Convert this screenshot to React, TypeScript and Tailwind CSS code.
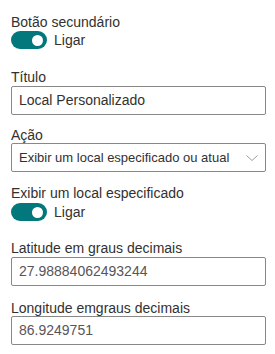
const FONT = "font-['Liberation_Sans',Arial,sans-serif]";

function Label({ text, className = '' }: { text: string; className?: string }) {
  return <div className={`text-[14px] leading-[18px] text-[#323130] ${className}`}>{text}</div>;
}

function Toggle({ className = '' }: { className?: string }) {
  return (
    <div className={`flex h-[18px] items-center gap-[7px] ${className}`}>
      <div className="flex h-[18px] w-[36px] items-center justify-end rounded-full bg-[#03787c] pr-[4px]">
        <div className="h-[11px] w-[11px] rounded-full bg-white" />
      </div>
      <span className="text-[14px] leading-[18px] text-[#323130]">Ligar</span>
    </div>
  );
}

function TextInput({ value, muted = false, className = '' }: { value: string; muted?: boolean; className?: string }) {
  return (
    <div
      className={`flex h-[29px] items-center rounded-[2px] border border-[#8a8886] bg-white px-[7px] text-[14px] ${
        muted ? 'text-[#57555a]' : 'text-[#323130]'
      } ${className}`}
    >
      {value}
    </div>
  );
}

function Dropdown({ value, className = '' }: { value: string; className?: string }) {
  return (
    <div
      className={`flex h-[29px] items-center justify-between rounded-[2px] border border-[#8a8886] bg-white pl-[7px] pr-[7px] text-[13px] text-[#323130] ${className}`}
    >
      <span className="whitespace-nowrap">{value}</span>
      <svg width="12" height="12" viewBox="0 0 12 12" fill="none" stroke="#a19f9d" strokeWidth="1">
        <polyline points="0.5,3.5 6,8.5 11.5,3.5" />
      </svg>
    </div>
  );
}

export default function App() {
  return (
    <div className={`h-[354px] w-[275px] bg-white pl-[11px] pr-[9px] pt-[13px] ${FONT}`}>
      <Label text="Botão secundário" />
      <Toggle />

      <Label text="Título" className="mt-[19px]" />
      <TextInput value="Local Personalizado" />

      <Label text="Ação" className="mt-[11px]" />
      <Dropdown value="Exibir um local especificado ou atual" className="-mt-[1px]" />

      <Label text="Exibir um local especificado" className="mt-[12px]" />
      <Toggle className="mt-[1px]" />

      <Label text="Latitude em graus decimais" className="mt-[18px]" />
      <TextInput value="27.98884062493244" muted className="h-[28px]" />

      <Label text="Longitude emgraus decimais" className="mt-[13px]" />
      <TextInput value="86.9249751" muted className="-mt-[1px]" />
    </div>
  );
}
